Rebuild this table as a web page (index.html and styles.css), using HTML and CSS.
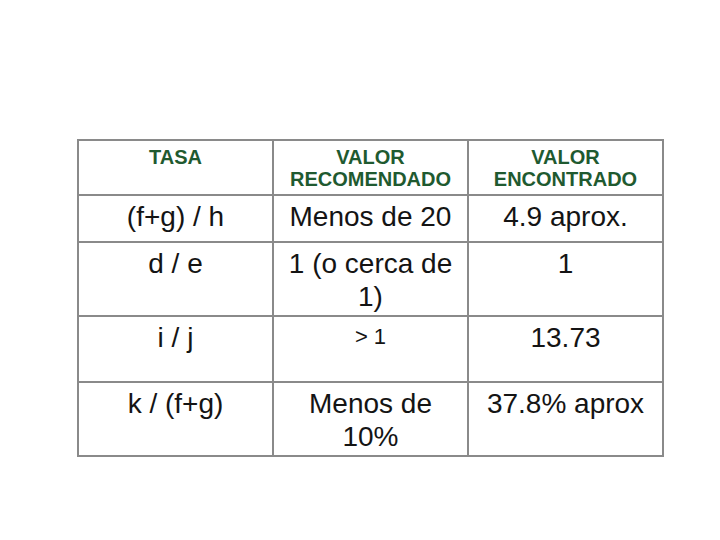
FILE: index.html
```html
<!DOCTYPE html>
<html lang="es">
<head>
<meta charset="utf-8">
<title>Tasas</title>
<link rel="stylesheet" href="styles.css">
</head>
<body>
<div class="page">
  <table class="ratios">
    <colgroup><col class="c"><col class="c"><col class="c"></colgroup>
    <tr class="r-head">
      <th>TASA</th>
      <th>VALOR<br>RECOMENDADO</th>
      <th>VALOR<br>ENCONTRADO</th>
    </tr>
    <tr class="r2">
      <td>(f+g) / h</td>
      <td>Menos de 20</td>
      <td>4.9 aprox.</td>
    </tr>
    <tr class="r3">
      <td>d / e</td>
      <td>1 (o cerca de<br>1)</td>
      <td>1</td>
    </tr>
    <tr class="r4">
      <td>i / j</td>
      <td><span class="small">&gt; 1</span></td>
      <td>13.73</td>
    </tr>
    <tr class="r5">
      <td>k / (f+g)</td>
      <td>Menos de<br>10%</td>
      <td>37.8% aprox</td>
    </tr>
  </table>
</div>
</body>
</html>
```
FILE: styles.css
```css
html, body {
  margin: 0;
  padding: 0;
  background: #ffffff;
}

.page {
  width: 720px;
  height: 540px;
  box-sizing: border-box;
  padding: 139px 0 0 77px;
}

.ratios {
  border-collapse: collapse;
  table-layout: fixed;
  width: 584px;
  font-family: "Liberation Sans", Arial, sans-serif;
  color: #141414;
}

.ratios col.c {
  width: 195px;
}

.ratios th,
.ratios td {
  border: 2px solid #8a8a8a;
  text-align: center;
  vertical-align: top;
  padding: 0;
}

.ratios th {
  font-size: 20px;
  font-weight: bold;
  line-height: 22px;
  color: #1f5a30;
  padding-top: 5px;
}

.ratios td {
  font-size: 28px;
  line-height: 33px;
  padding-top: 4px;
}

.r-head { height: 55px; }
.r2 { height: 47px; }
.r3 { height: 74px; }
.r4 { height: 66px; }
.r5 { height: 74px; }

.ratios td .small {
  font-size: 22px;
  position: relative;
  top: -3px;
}
```
